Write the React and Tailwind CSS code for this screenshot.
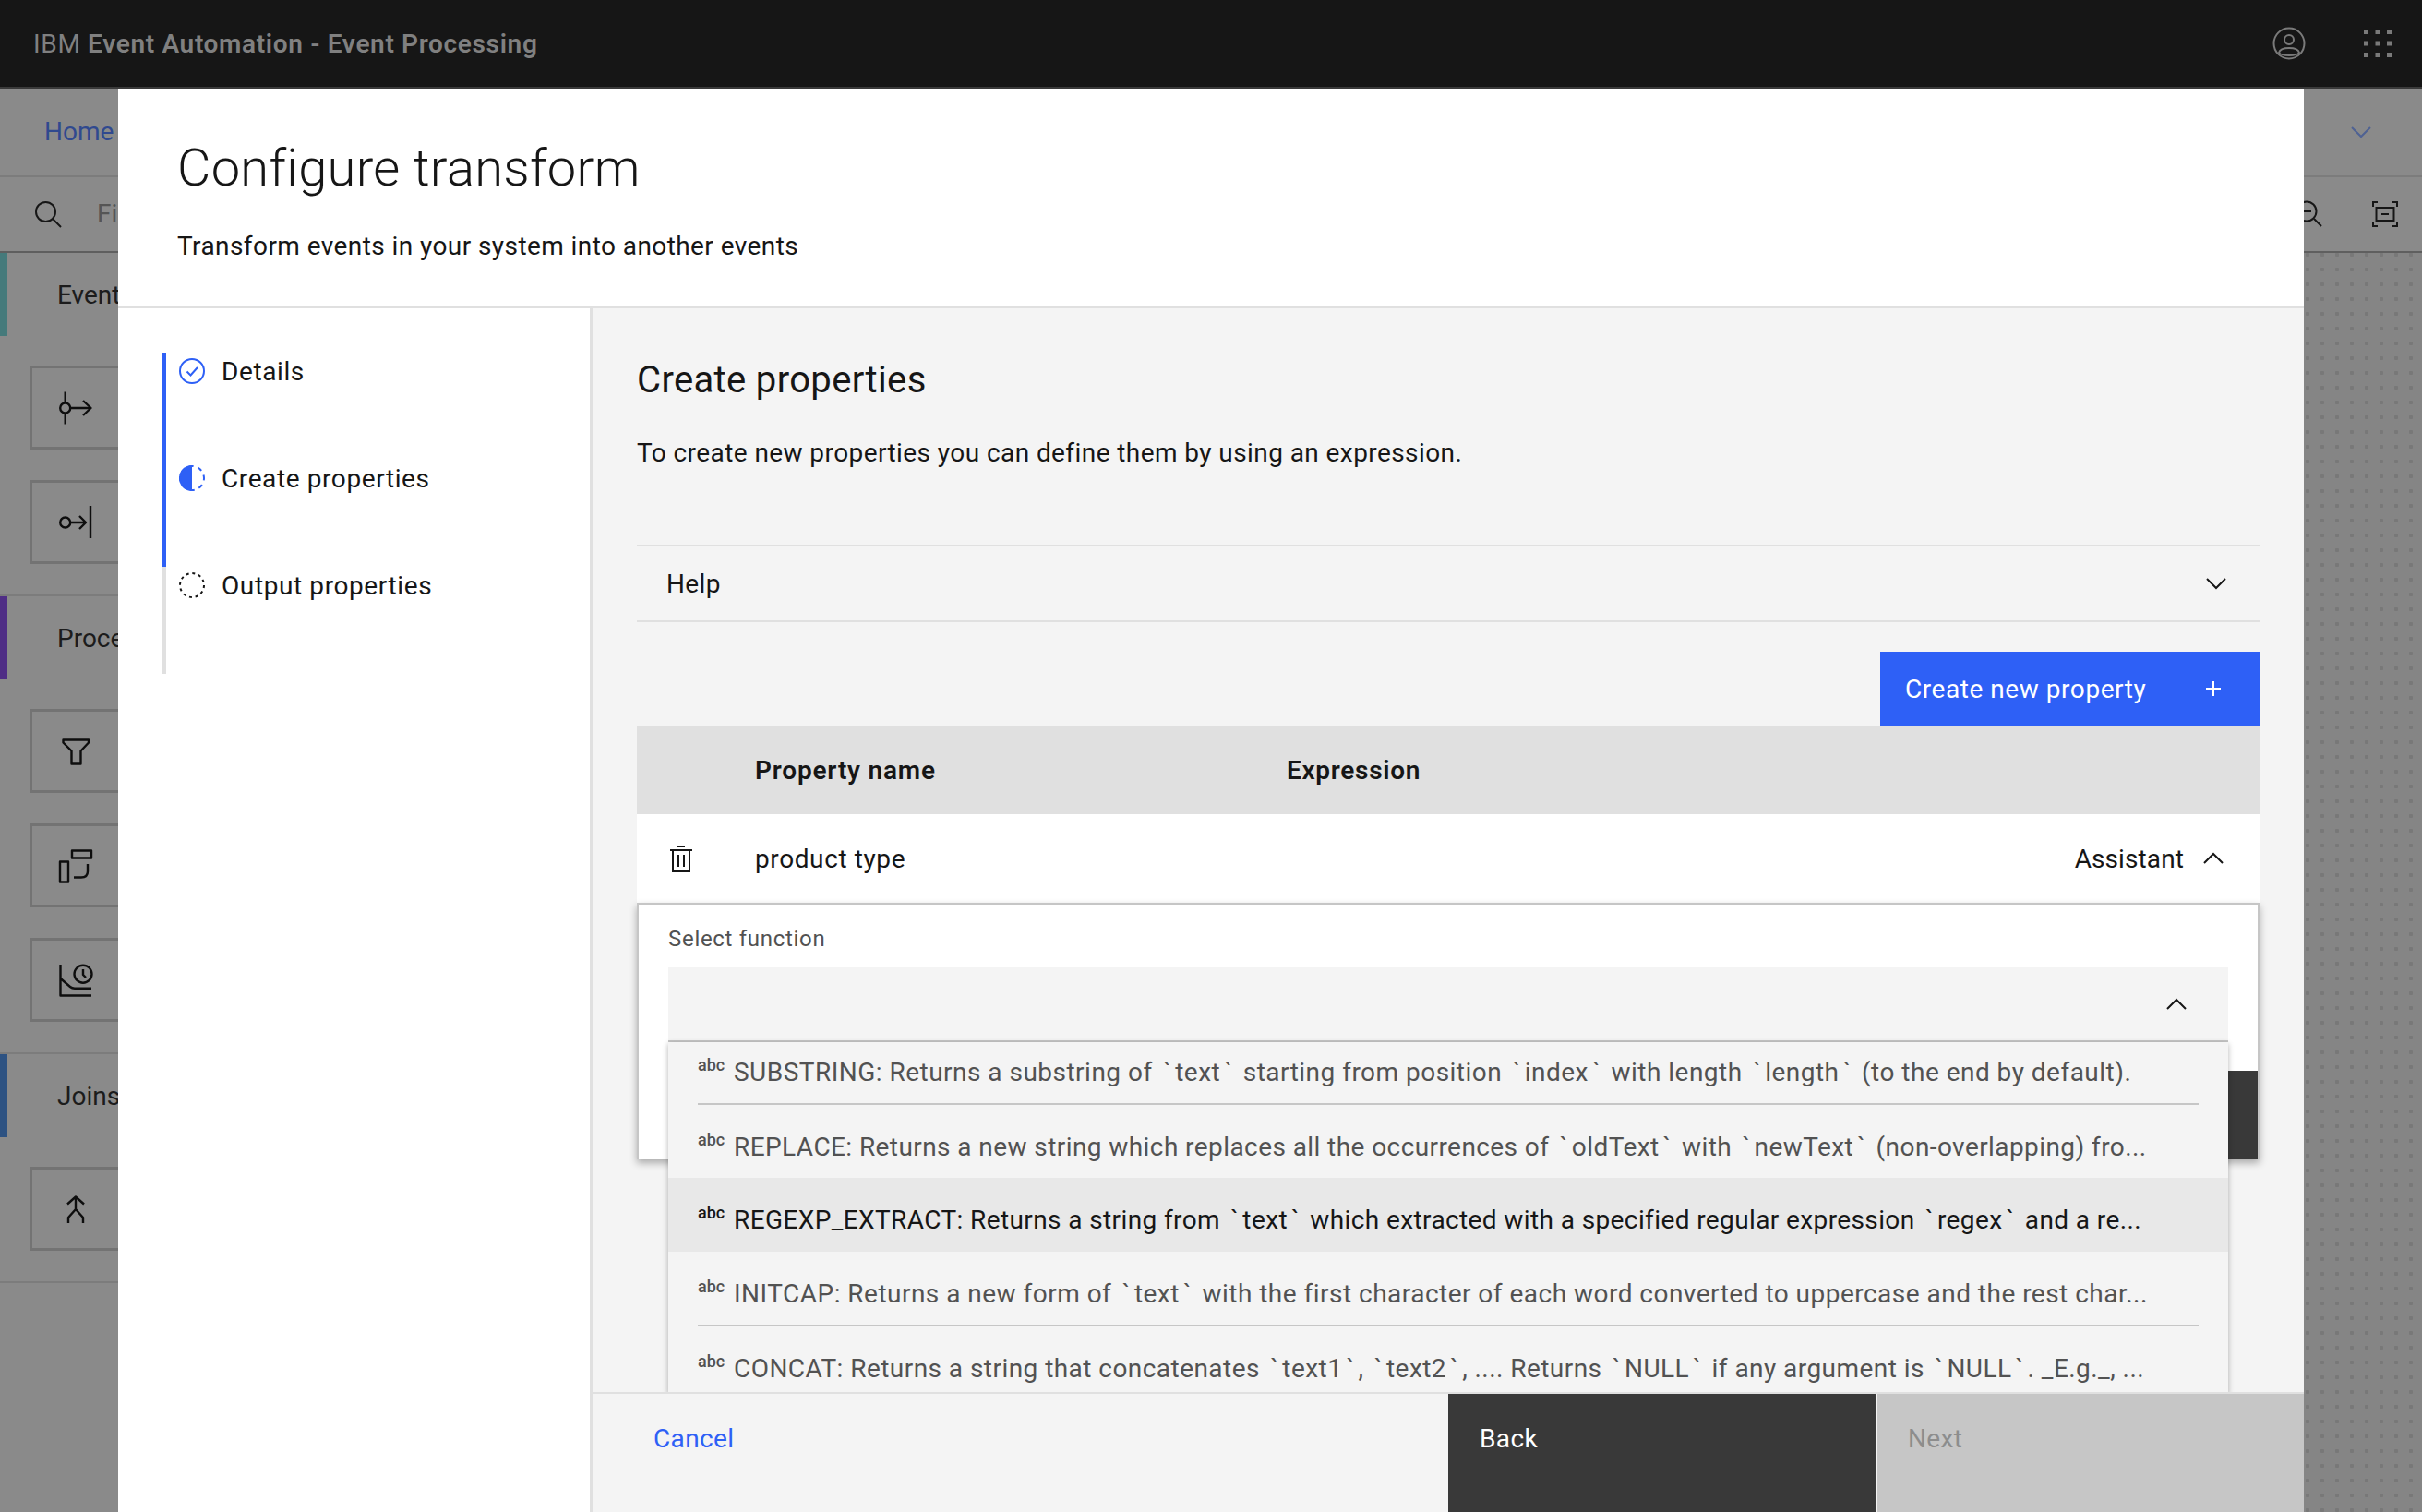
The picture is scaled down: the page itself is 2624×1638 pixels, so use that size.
import React from 'react';

const rows = [
    { text: 'SUBSTRING: Returns a substring of `text` starting from position `index` with length `length` (to the end by default).', sep: true, height: 'h-[81px]', track: 'tracking-[0.48px]' },
    { text: 'REPLACE: Returns a new string which replaces all the occurrences of `oldText` with `newText` (non-overlapping) fro...', height: 'h-[79px]', track: 'tracking-[0.42px]' },
    { text: 'REGEXP_EXTRACT: Returns a string from `text` which extracted with a specified regular expression `regex` and a re...', active: true, height: 'h-[80px]', track: 'tracking-[0.39px]' },
    { text: 'INITCAP: Returns a new form of `text` with the first character of each word converted to uppercase and the rest char...', sep: true, height: 'h-[81px]', track: 'tracking-[0.48px]' },
    { text: 'CONCAT: Returns a string that concatenates `text1`, `text2`, .... Returns `NULL` if any argument is `NULL`. _E.g._, ...', height: 'h-[80px]', track: 'tracking-[0.45px]' },
];

// backticks sit wider apart in the original font
function RowText({ text }) {
    const parts = text.split('`');
    return parts.map((part, index) => (
        <React.Fragment key={index}>
            {part}
            {index < parts.length - 1 ? <span className="mx-[4px]">`</span> : null}
        </React.Fragment>
    ));
}

function Chevron({ up, className = 'text-[#161616]' }) {
    return (
        <svg viewBox="0 0 32 32" className={`w-8 h-8 ${className}`} fill="none" stroke="currentColor" strokeWidth="2">
            <path d={up ? 'M6 21 L16 11 L26 21' : 'M6 11 L16 21 L26 11'} />
        </svg>
    );
}

function ToolBox({ children }) {
    return (
        <div className="w-[200px] h-[91px] border-[3px] border-[#737373] flex items-center pl-[27px]">
            <svg viewBox="0 0 40 40" className="w-10 h-10 text-[#0e0e0e]" fill="none" stroke="currentColor" strokeWidth="2.4" strokeLinejoin="round">
                {children}
            </svg>
        </div>
    );
}

function Section({ label, bar, pb, children }) {
    return (
        <div className={`border-b-2 border-[#7c7c7c] ${pb}`}>
            <div className="h-[90px] flex items-center">
                <div className={`w-2 h-full ${bar}`}></div>
                <span className="ml-[54px] pt-[2px] text-[28px] text-[#1c1c1c]">{label}</span>
            </div>
            <div className="pl-8 pt-8 flex flex-col gap-[33px]">{children}</div>
        </div>
    );
}

function Step({ icon, label, bar }) {
    return (
        <div className={`h-[116px] border-l-4 ${bar} pl-[12px] pt-1 flex items-start gap-[16px]`}>
            <svg viewBox="0 0 32 32" className="w-8 h-8 text-[#2e60f6]" fill="none" stroke="currentColor" strokeWidth="2">{icon}</svg>
            <span className="text-[28px] leading-[34px] tracking-[0.6px] text-[#161616]">{label}</span>
        </div>
    );
}

export default function App() {
    return (
        <div className="relative w-[2624px] h-[1638px] overflow-hidden bg-[#8a8a8a] flex flex-col font-['Roboto',sans-serif]">
            <header className="h-[96px] shrink-0 bg-[#161616] border-b-2 border-[#3a3a3a] flex items-center justify-between pl-[36px] pr-[33px]">
                <div className="pt-[2px] text-[28px] text-[#808080] tracking-[0.66px]">
                    <span className="font-normal">IBM </span>
                    <span className="font-semibold">Event Automation - Event Processing</span>
                </div>
                <div className="flex items-center gap-[63px]">
                    <svg viewBox="0 0 36 36" className="w-9 h-9 text-[#7a7a7a]" fill="none" stroke="currentColor" strokeWidth="2">
                        <circle cx="18" cy="18" r="16.5" />
                        <circle cx="18" cy="14" r="5" />
                        <path d="M7 28 C8 24 12 23 18 23 C24 23 28 24 29 28 C26 32 10 32 7 28 Z" />
                    </svg>
                    <svg viewBox="0 0 30 30" className="w-[30px] h-[30px] text-[#7a7a7a]" fill="currentColor">
                        <rect x="0" y="0" width="5" height="5" /><rect x="12.5" y="0" width="5" height="5" /><rect x="25" y="0" width="5" height="5" />
                        <rect x="0" y="12.5" width="5" height="5" /><rect x="12.5" y="12.5" width="5" height="5" /><rect x="25" y="12.5" width="5" height="5" />
                        <rect x="0" y="25" width="5" height="5" /><rect x="12.5" y="25" width="5" height="5" /><rect x="25" y="25" width="5" height="5" />
                    </svg>
                </div>
            </header>

            {/* page behind the modal */}
            <div className="h-[96px] shrink-0 border-b-2 border-[#7c7c7c] flex items-center justify-between pl-[48px] pr-[50px]">
                <span className="text-[28px] text-[#30498f]">Home</span>
                <Chevron className="text-[#4f6293]" />
            </div>
            <div className="h-[82px] shrink-0 border-b-2 border-[#5f5f5f] flex items-center justify-between pl-[36px] pr-[24px]">
                <div className="flex items-center gap-[37px]">
                    <svg viewBox="0 0 32 32" className="w-8 h-8 text-[#161616]" fill="none" stroke="currentColor" strokeWidth="2">
                        <circle cx="13.5" cy="13.5" r="10.5" /><path d="M21 21 L30 30" />
                    </svg>
                    <span className="text-[28px] text-[#555555]">Filter</span>
                </div>
                <div className="flex items-center gap-[50px]">
                    <svg viewBox="0 0 32 32" className="w-8 h-8 text-[#161616]" fill="none" stroke="currentColor" strokeWidth="2">
                        <circle cx="13" cy="13" r="10.5" /><path d="M21 21 L29 29 M8 13 H18" />
                    </svg>
                    <svg viewBox="0 0 32 32" className="w-8 h-8 text-[#161616]" fill="none" stroke="currentColor" strokeWidth="2">
                        <path d="M3 8 V3 H8 M24 3 H29 V8 M3 24 V29 H8 M24 29 H29 V24" />
                        <rect x="6.5" y="9" width="19" height="14" /><path d="M12 16 H20" />
                    </svg>
                </div>
            </div>
            <div className="flex-1 flex min-h-0">
                <div className="w-[400px] shrink-0">
                    <Section label="Event source" bar="bg-[#457a7b]" pb="pb-[33px]">
                        <ToolBox>
                            <path d="M8.7 2.5 V14.5 M8.7 25.5 V37.5 M14 20 H36" /><circle cx="8.7" cy="20" r="5.5" /><path d="M28 12 L36.5 20 L28 28" />
                        </ToolBox>
                        <ToolBox>
                            <circle cx="8.7" cy="20" r="5.5" /><path d="M14 20 H30 M24 13 L31 20 L24 27 M36 2 V37" />
                        </ToolBox>
                    </Section>
                    <Section label="Processors" bar="bg-[#4f2d85]" pb="pb-[33px]">
                        <ToolBox>
                            <path d="M6.5 7.5 H34 V10.5 L25.5 19.5 V33.5 H15.5 V19.5 L6.5 10.5 Z" />
                        </ToolBox>
                        <ToolBox>
                            <rect x="3" y="15.5" width="9" height="22" /><rect x="16" y="3.5" width="21" height="8" /><path d="M33 18 V26 Q33 32.5 26 32.5 H18" />
                        </ToolBox>
                        <ToolBox>
                            <path d="M3.5 3 V36.5 H37 M3.5 18 L14 27 Q16 28.7 19 28.7 H37" /><circle cx="28" cy="13.2" r="9.5" /><path d="M28 8 V14 L31 17" />
                        </ToolBox>
                    </Section>
                    <Section label="Joins" bar="bg-[#2d5282]" pb="pb-[33px]">
                        <ToolBox>
                            <path d="M11 14.5 L20 6.5 L29 14.5 M20 6.5 V20 M12 35 V29 L20 20 L28 29 V35" />
                        </ToolBox>
                    </Section>
                </div>
                <div className="flex-1 bg-[#858585] bg-[radial-gradient(circle,#787878_2px,transparent_2.5px)] bg-[size:16px_16px] bg-[position:-4px_-6px]"></div>
            </div>

            {/* modal */}
            <div className="absolute left-[128px] top-[96px] bottom-0 w-[2368px] bg-white flex flex-col text-[#161616]">
                <div className="h-[238px] shrink-0 border-b-2 border-[#e0e0e0] pl-[64px] pt-[54px]">
                    <h1 className="text-[56px] leading-[64px] font-light tracking-[0.3px]">Configure transform</h1>
                    <p className="mt-[35px] text-[28px] leading-9 tracking-[0.42px]">Transform events in your system into another events</p>
                </div>
                <div className="flex-1 flex min-h-0">
                    <div className="w-[514px] shrink-0 border-r-[3px] border-[#e0e0e0] pl-[48px] pt-[48px]">
                        <Step
                            bar="border-[#2e60f6]"
                            label="Details"
                            icon={<><circle cx="16" cy="16" r="13" /><path d="M10.5 16.5 L14.5 20.5 L22 12" /></>}
                        />
                        <Step
                            bar="border-[#2e60f6]"
                            label="Create properties"
                            icon={<><path d="M16 2 A14 14 0 0 0 16 30 Z" fill="currentColor" stroke="none" /><circle cx="16" cy="16" r="13" strokeDasharray="5 5" strokeDashoffset="2.5" /></>}
                        />
                        <Step
                            bar="border-[#e0e0e0]"
                            label="Output properties"
                            icon={<circle cx="16" cy="16" r="13" stroke="#161616" strokeDasharray="3 3.8" />}
                        />
                    </div>
                    <div className="flex-1 min-w-0 bg-[#f4f4f4] flex flex-col">
                        <div className="flex-1 min-h-0 overflow-hidden pl-[48px] pr-[48px] pt-[54px]">
                            <h2 className="text-[40px] leading-[48px] font-normal tracking-[0.35px]">Create properties</h2>
                            <p className="mt-[37px] text-[28px] leading-9 tracking-[0.42px]">To create new properties you can define them by using an expression.</p>
                            <div className="mt-[81px] h-[84px] border-y-2 border-[#e0e0e0] flex items-center justify-between pl-8 pr-[31px]">
                                <span className="pt-[2px] text-[28px] tracking-[0.35px]">Help</span>
                                <Chevron />
                            </div>
                            <div className="mt-[32px] flex justify-end">
                                <button className="w-[411px] h-[80px] bg-[#2e60f6] text-white flex items-center justify-between pl-[27px] pr-[34px]">
                                    <span className="pt-[2px] text-[28px] tracking-[0.55px]">Create new property</span>
                                    <svg viewBox="0 0 32 32" className="w-8 h-8" fill="none" stroke="currentColor" strokeWidth="2"><path d="M16 8 V24 M8 16 H24" /></svg>
                                </button>
                            </div>
                            <div className="h-[96px] bg-[#e0e0e0] flex items-center pt-[2px] pl-[128px] text-[28px] font-semibold">
                                <span className="w-[576px] tracking-[0.8px]">Property name</span>
                                <span className="tracking-[0.7px]">Expression</span>
                            </div>
                            <div className="h-[96px] bg-white flex items-center pl-[32px] pr-[34px]">
                                <svg viewBox="0 0 32 32" className="w-8 h-8 text-[#161616]" fill="none" stroke="currentColor" strokeWidth="2">
                                    <path d="M12 3 H20 M4 7 H28 M7 7 V30 H25 V7 M13 12 V25 M19 12 V25" />
                                </svg>
                                <span className="ml-[64px] pt-[2px] text-[28px] tracking-[0.6px]">product type</span>
                                <span className="ml-auto mr-[16px] pt-[2px] text-[28px] tracking-[0.1px]">Assistant</span>
                                <Chevron up />
                            </div>
                            <div className="relative h-[278px] bg-white border-2 border-b-0 border-[#c6c6c6] shadow-[0_4px_8px_rgba(0,0,0,0.3)] pt-[21px] pl-8">
                                <div className="text-[24px] leading-8 text-[#525252] tracking-[0.7px]">Select function</div>
                                <div className="mt-[15px] w-[1690px] h-[81px] bg-[#f4f4f4] border-b-2 border-[#c6c6c6] flex items-center justify-end pr-10">
                                    <Chevron up />
                                </div>
                                <div className="mt-[31px] ml-auto w-[300px] h-[96px] bg-[#393939]"></div>
                                <div className="absolute left-8 top-[149px] w-[1690px] h-[380px] overflow-hidden bg-[#f4f4f4] shadow-[0_2px_6px_rgba(0,0,0,0.3)]">
                                    <div className="-mt-[13px]">
                                        {rows.map((row) => (
                                            <div key={row.text} className={`${row.height} ${row.active ? 'bg-[#e8e8e8] text-[#161616]' : 'text-[#525252]'} pl-8 pr-8`}>
                                                <div className={`h-full pt-[28px] flex items-start gap-[10px] ${row.sep ? 'border-b-2 border-[#c6c6c6]' : ''}`}>
                                                    <span className="text-[18px] leading-[18px] font-medium mt-[1px] w-[29px]">abc</span>
                                                    <span className={`text-[28px] leading-9 ${row.track} whitespace-nowrap`}><RowText text={row.text} /></span>
                                                </div>
                                            </div>
                                        ))}
                                    </div>
                                </div>
                            </div>
                        </div>
                        <div className="h-[130px] shrink-0 border-t-2 border-[#e0e0e0] flex">
                            <button className="w-[927px] text-left pl-[66px] pb-[30px] text-[28px] tracking-[0.35px] text-[#2e60f6]">Cancel</button>
                            <button className="w-[463px] bg-[#393939] text-white text-left pl-[34px] pb-[30px] text-[28px] tracking-[0.35px]">Back</button>
                            <button className="ml-[2px] flex-1 bg-[#c6c6c6] text-[#8d8d8d] text-left pl-[33px] pb-[30px] text-[28px] tracking-[0.35px]">Next</button>
                        </div>
                    </div>
                </div>
            </div>
        </div>
    );
}
